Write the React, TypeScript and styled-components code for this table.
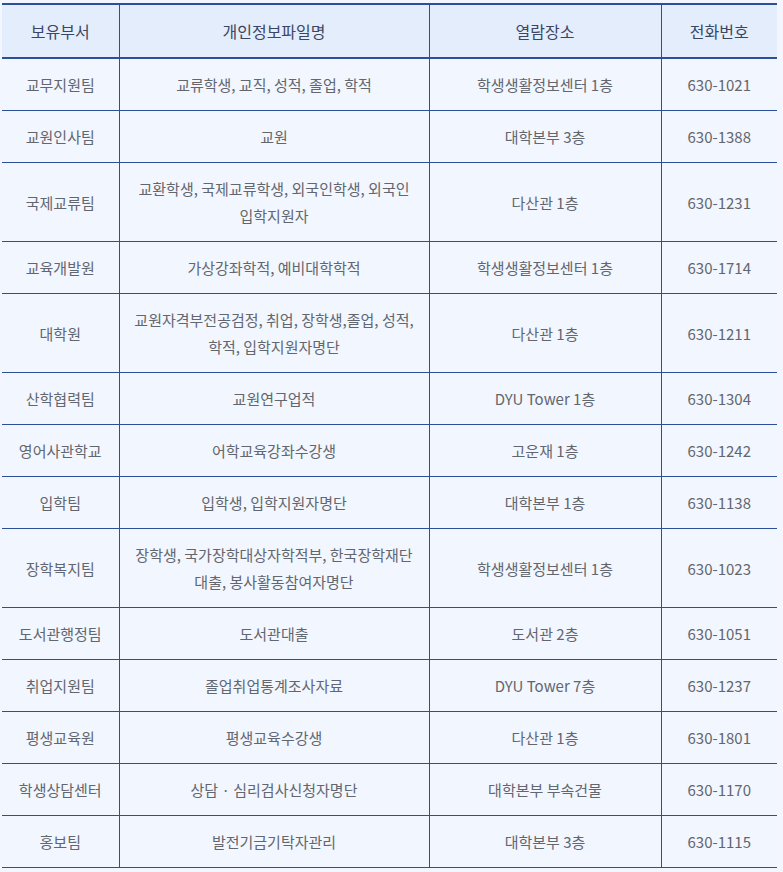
import React from "react";
import styled, { createGlobalStyle } from "styled-components";

const Global = createGlobalStyle`
  html, body { margin: 0; padding: 0; background: #f3f6fe; }
  body { font-family: "Noto Sans CJK KR", "Noto Sans", sans-serif; }
`;

const Wrap = styled.div`
  padding: 3px 6px 0 2px;
`;

const Table = styled.table`
  width: 775px;
  border-collapse: collapse;
  table-layout: fixed;
  border-top: 2px solid #2c4f9b;
  border-bottom: 1px solid #2c4f9b;
  background: #f2f6fe;
`;

const Th = styled.th`
  height: 52px;
  padding: 0 8px;
  background: #e3edfc;
  color: #3b4663;
  font-size: 16px;
  font-weight: 400;
  text-align: center;
  border-bottom: 2px solid #2c4f9b;
  border-left: 1px solid #2c4f9b;
  &:first-child { border-left: none; }
`;

const Td = styled.td`
  padding: 12px 10px;
  line-height: 27px;
  color: #62666e;
  font-size: 15px;
  text-align: center;
  vertical-align: middle;
  border-top: 1px solid #2c4f9b;
  border-left: 1px solid #2c4f9b;
  &:first-child { border-left: none; }
`;

const rows: [string, string, string, string][] = [
  ["교무지원팀", "교류학생, 교직, 성적, 졸업, 학적", "학생생활정보센터 1층", "630-1021"],
  ["교원인사팀", "교원", "대학본부 3층", "630-1388"],
  ["국제교류팀", "교환학생, 국제교류학생, 외국인학생, 외국인\n입학지원자", "다산관 1층", "630-1231"],
  ["교육개발원", "가상강좌학적, 예비대학학적", "학생생활정보센터 1층", "630-1714"],
  ["대학원", "교원자격부전공검정, 취업, 장학생,졸업, 성적,\n학적, 입학지원자명단", "다산관 1층", "630-1211"],
  ["산학협력팀", "교원연구업적", "DYU Tower 1층", "630-1304"],
  ["영어사관학교", "어학교육강좌수강생", "고운재 1층", "630-1242"],
  ["입학팀", "입학생, 입학지원자명단", "대학본부 1층", "630-1138"],
  ["장학복지팀", "장학생, 국가장학대상자학적부, 한국장학재단\n대출, 봉사활동참여자명단", "학생생활정보센터 1층", "630-1023"],
  ["도서관행정팀", "도서관대출", "도서관 2층", "630-1051"],
  ["취업지원팀", "졸업취업통계조사자료", "DYU Tower 7층", "630-1237"],
  ["평생교육원", "평생교육수강생", "다산관 1층", "630-1801"],
  ["학생상담센터", "상담 · 심리검사신청자명단", "대학본부 부속건물", "630-1170"],
  ["홍보팀", "발전기금기탁자관리", "대학본부 3층", "630-1115"],
];

function Lines({ text }: { text: string }) {
  const parts = text.split("\n");
  return (
    <>
      {parts.map((p, i) => (
        <React.Fragment key={i}>
          {i > 0 && <br />}
          {p}
        </React.Fragment>
      ))}
    </>
  );
}

export default function App() {
  return (
    <>
      <Global />
      <Wrap>
        <Table>
          <colgroup>
            <col style={{ width: 117 }} />
            <col style={{ width: 310 }} />
            <col style={{ width: 232 }} />
            <col style={{ width: 116 }} />
          </colgroup>
          <thead>
            <tr>
              <Th>보유부서</Th>
              <Th>개인정보파일명</Th>
              <Th>열람장소</Th>
              <Th>전화번호</Th>
            </tr>
          </thead>
          <tbody>
            {rows.map((r) => (
              <tr key={r[0]}>
                <Td>{r[0]}</Td>
                <Td>
                  <Lines text={r[1]} />
                </Td>
                <Td>{r[2]}</Td>
                <Td>{r[3]}</Td>
              </tr>
            ))}
          </tbody>
        </Table>
      </Wrap>
    </>
  );
}
